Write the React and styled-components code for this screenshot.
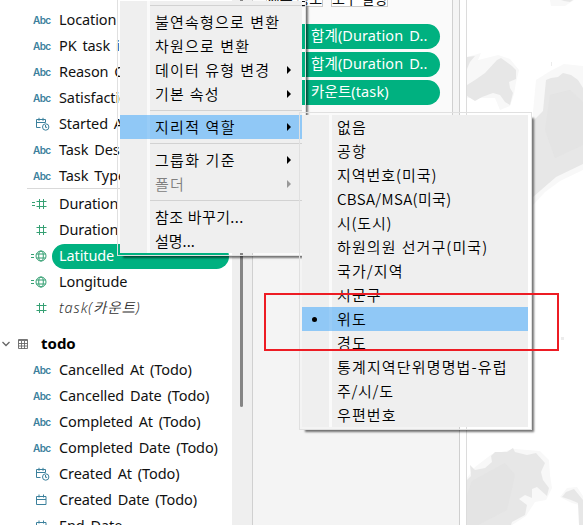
import React from "react";
import styled, { createGlobalStyle, css } from "styled-components";

const Global = createGlobalStyle`
  * { box-sizing: border-box; }
  body { margin: 0; overflow: hidden; background: #fff; }
`;

const Page = styled.div`
  position: relative;
  display: flex;
  width: 583px;
  height: 525px;
  overflow: hidden;
  background: #fff;
  color: #111;
  font: 15px/24px "Noto Sans", "Noto Sans CJK KR", sans-serif;
`;

const Sidebar = styled.aside`
  width: 232px;
  padding-top: 7px;
  background: #fff;
`;

const FieldRow = styled.div`
  display: grid;
  grid-template-columns: 52px 177px;
  height: 26px;
  align-items: center;
`;

const FieldIcon = styled.span`
  display: flex;
  justify-content: flex-end;
  padding-right: ${(p) => p.$inset}px;
  color: ${(p) => p.$color};
`;

const Abc = styled.span`
  width: 17px;
  font: 600 10px/12px Inter, sans-serif;
  letter-spacing: -0.6px;
`;

const FieldName = styled.span`
  height: 25px;
  padding-left: 7px;
  border-radius: 13px;
  line-height: 23px;
  white-space: nowrap;
  font-size: 14.5px;
  letter-spacing: -0.1px;
  word-spacing: 2.2px;
  ${(p) => p.$selected && css`background: #00b180; color: #fff;`}
  ${(p) => p.$italic && css`
    color: #333;
    font-style: italic;
    font-weight: 350;
    letter-spacing: 0.9px;
  `}
`;

const Divider = styled.div`
  height: 1px;
  margin: -1px 0 2px 27px;
  background: #d9d9d9;
`;

const TableHead = styled.div`
  display: grid;
  grid-template-columns: 16px 23px 1fr;
  align-items: center;
  height: 26px;
  margin-top: 10px;
  padding-left: 2px;
  color: #666;
`;

const TableName = styled.b`
  color: #000;
  font-size: 15px;
  line-height: 22px;
  height: 24px;
`;

const Gutter = styled.div`
  width: 21px;
  padding-left: 8px;
  background: #efefef;
  border-right: 1px solid #d0d0d0;
`;

const Thumb = styled.div`
  width: 3px;
  height: 407px;
  border-radius: 0 0 2px 2px;
  background: #858585;
`;

const Shelf = styled.section`
  width: 207px;
  background: #f4f4f4;
  border-right: 1px solid #cfcfcf;
`;

const MarksCard = styled.div`
  width: 200px;
  height: 260px;
  background: #fafafa;
  border-right: 1px solid #d0d0d0;
`;

const MarkButtons = styled.div`
  display: flex;
  gap: 8px;
  height: 24px;
  padding-left: 13px;
`;

const MarkButton = styled.div`
  display: flex;
  align-items: flex-end;
  justify-content: center;
  width: 57px;
  height: 7px;
  overflow: hidden;
  background: #fff;
  border: 1px solid #cacaca;
  border-top: 0;
  font-size: 14px;
  line-height: 20px;
  white-space: nowrap;
  span { margin-bottom: -3px; }
`;

const Pill = styled.div`
  width: 167px;
  height: 25px;
  margin: 0 0 3px 20px;
  padding-left: 38px;
  border-radius: 13px;
  background: #00b180;
  color: #fff;
  line-height: 22px;
  white-space: nowrap;
  font-size: 14.5px;
  letter-spacing: 0.1px;
  word-spacing: 2.2px;
`;

const Viz = styled.section`
  width: 123px;
  padding-left: 6px;
  background: #fff;
`;

const MapPane = styled.div`
  height: 525px;
  border-left: 1px solid #dcdcdc;
  svg { display: block; }
`;

const MenuPanel = styled.div`
  position: absolute;
  left: ${(p) => p.$x}px;
  top: ${(p) => p.$y}px;
  width: ${(p) => p.$w}px;
  padding: 2px 3px 2px 2px;
  border: 1px solid #e0e0e0;
  background: linear-gradient(90deg, #efefef 27px, #fafafa 27px 30px, #efefef 30px) content-box #fafafa;
  box-shadow: 4px 4px 2px -2px rgba(0, 0, 0, 0.55);
  ${(p) => p.$clipped && css`padding-top: 1px; border-top: 0;`}
`;

const MenuItem = styled.div`
  display: grid;
  grid-template-columns: 35px 1fr 15px;
  align-items: center;
  height: 24px;
  color: ${(p) => (p.$disabled ? "#808080" : "#000")};
  ${(p) => p.$active && css`background: linear-gradient(90deg, #90c8f6 27px, #98ccf7 27px 30px, #90c8f6 30px);`}
`;

const MenuText = styled.span`
  height: 24px;
  white-space: nowrap;
  font-family: "Noto Sans CJK KR", sans-serif;
  font-weight: 350;
  font-size: 15px;
  line-height: 24px;
  letter-spacing: ${(p) => p.$ls ?? 1.1}px;
  word-spacing: 0.6px;
`;

const Dot = styled.i`
  display: block;
  width: 5px;
  height: 5px;
  margin-left: 10px;
  border-radius: 50%;
  background: #000;
`;

const Arrow = styled.i`
  width: 4px;
  border: 4px solid transparent;
  border-left-color: ${(p) => (p.$disabled ? "#999" : "#000")};
  border-right: 0;
`;

const Separator = styled.div`
  height: 9px;
  padding: 4px 0 0 30px;
  &::before { content: ""; display: block; height: 1px; background: #d2d2d2; }
`;

const Highlight = styled.div`
  position: absolute;
  left: 264px;
  top: 293px;
  width: 295px;
  height: 58px;
  border: 2px solid #ed1c24;
`;

const BLUE = "#3b809c";
const GREEN = "#35a073";

const Calendar = ({ clock }) => (
  <svg width={clock ? 14 : 11} height="14" viewBox={clock ? "0 0 14 14" : "0 0 11 14"} fill="none" stroke="currentColor">
    {clock ? (
      <>
        <path d="M4.5 10.5h-4v-8h9v3M.5 5.5h9M3 .8v3M7 .8v3" />
        <circle cx="9.7" cy="10" r="3.2" />
        <path d="M9.5 8v2.3h1.6" />
      </>
    ) : (
      <path d="M.5 3.5h9.5v8H.5zM.5 6.5h9.5M3 1.5v3M7.5 1.5v3" />
    )}
  </svg>
);

const Hash = ({ calc }) => (
  <svg width="15" height="12" viewBox="0 0 15 12" fill="none" stroke="currentColor">
    {calc && <path d="M0 4.5h3M0 7.5h3" />}
    <path d="M7.5 1v10M11.5 1v10M4.5 3.5h10M4.5 8.5h10" />
  </svg>
);

const Globe = () => (
  <svg width="16" height="12" viewBox="0 0 16 12" fill="none" stroke="currentColor">
    <path d="M0 4.5h3M0 7.5h3" />
    <circle cx="10" cy="6" r="5" />
    <ellipse cx="10" cy="6" rx="2.3" ry="5" />
    <path d="M5.5 4h9M5.5 8h9" />
  </svg>
);

const Chevron = () => (
  <svg width="8" height="6" viewBox="0 0 8 6" fill="none" stroke="currentColor" strokeWidth="1.3">
    <path d="M.5 1L4 4.5 7.5 1" />
  </svg>
);

const TableIcon = () => (
  <svg width="10" height="10" viewBox="0 0 10 10" fill="none" stroke="currentColor" strokeWidth="0.9">
    <path d="M.5.5h9v9h-9zM.5 1.5h9M.5 4.5h9M.5 7h9M3.5 2v8M6.5 2v8" />
  </svg>
);

const icons = {
  abc: [<Abc>Abc</Abc>, BLUE, 2],
  datetime: [<Calendar clock />, BLUE, 2],
  date: [<Calendar />, BLUE, 5],
  calc: [<Hash calc />, GREEN, 5],
  hash: [<Hash />, GREEN, 5],
  globe: [<Globe />, GREEN, 5],
};

const Field = ({ icon, name, ...rest }) => {
  const [glyph, color, inset] = icons[icon];
  return (
    <FieldRow>
      <FieldIcon $color={color} $inset={inset}>{glyph}</FieldIcon>
      <FieldName {...rest}>{name}</FieldName>
    </FieldRow>
  );
};

const taskFields = [
  ["abc", "Location"], ["abc", "PK task id"], ["abc", "Reason Code"], ["abc", "Satisfaction"],
  ["datetime", "Started At"], ["abc", "Task Desc"], ["abc", "Task Type"],
];
const todoFields = [
  ["abc", "Cancelled At (Todo)"], ["abc", "Cancelled Date (Todo)"], ["abc", "Completed At (Todo)"],
  ["abc", "Completed Date (Todo)"], ["datetime", "Created At (Todo)"], ["date", "Created Date (Todo)"],
  ["date", "End Date"],
];
const fieldMenu = [
  null, { t: "불연속형으로 변환", ls: 1.2 }, { t: "차원으로 변환", ls: 1.2 }, { t: "데이터 유형 변경", sub: true, ls: 1.2 },
  { t: "기본 속성", sub: true }, null, { t: "지리적 역할", sub: true, active: true, ls: 1.3 }, null,
  { t: "그룹화 기준", sub: true, ls: 1.3 }, { t: "폴더", sub: true, disabled: true }, null,
  { t: "참조 바꾸기...", ls: 0.4 }, { t: "설명...", ls: 0 },
];
const roleMenu = [
  { t: "없음" }, { t: "공항" }, { t: "지역번호(미국)", ls: 0.95 }, { t: "CBSA/MSA(미국)", ls: 0.35 },
  { t: "시(도시)", ls: 0.8 }, { t: "하원의원 선거구(미국)" }, { t: "국가/지역" }, { t: "시군구" },
  { t: "위도", active: true, checked: true }, { t: "경도" }, { t: "통계지역단위명명법-유럽", ls: 1.15 },
  { t: "주/시/도", ls: 0.7 }, { t: "우편번호" },
];

const Menu = ({ items, ...rest }) => (
  <MenuPanel {...rest}>
    {items.map((m, k) => m ? (
      <MenuItem key={k} $active={m.active} $disabled={m.disabled}>
        <span>{m.checked && <Dot />}</span>
        <MenuText $ls={m.ls}>{m.t}</MenuText>
        {m.sub && <Arrow $disabled={m.disabled} />}
      </MenuItem>
    ) : <Separator key={k} />)}
  </MenuPanel>
);

const MapDrawing = () => (
  <svg width="116" height="525" viewBox="467 0 116 525">
    <g fill="#f8f8f8">
      <path d="M467 57L481 53 478 60 498 55 510 59 519 70 516 82 514 94 510 106 500 110 495 98 467 98z" />
      <path d="M550 0H574L565 6H551zM536 80L552 70 564 64 583 66V170L560 181 545 192 533 205V112z" />
      <path d="M467 478L475 467 492 454 515 449 540 451 549 460 550 475 552 488 546 500 535 502 526 516 512 525H467zM560 497L567 488 577 487 583 496V506L572 503z" />
    </g>
    <g fill="#e7e7e7">
      <path d="M467 85L475 80 485 73 497 60 501 58 512 66 516 70V79L509 82 510 88 513 93 510 105 505 102 500 95 493 93 482 97 475 101 467 96z" />
      <path d="M467 57L475 56 470 62 467 69zM561 0H573L570 2 564 1z" />
      <path d="M546 80L551 78 558 77 563 73 571 75 578 80 583 88V164L556 177 541 190 533 197V121L543 111z" />
      <path d="M467 480L471 476 470 465 475 470 485 468 492 462 491 456 495 452 507 452 513 448 515 452 527 455 536 453 545 463 541 472 543 480 549 488 547 496 537 487 532 489V498L525 495 519 499 527 505 525 515 512 522 511 525H467zM562 497L566 492 574 489 583 500V525H579L578 503 571 500z" />
    </g>
    <path d="M472 481L505 463 515 475 507 510 478 525H467V495zM550 95L570 90 583 102V145L555 158 545 130z" fill="#e2e2e2" opacity=".5" />
    <path d="M551 62h1v4h-1zM561 337h3v3h-3z" fill="#ececec" />
  </svg>
);

export default function App() {
  return (
    <Page>
      <Global />
      <Sidebar>
        {taskFields.map(([i, n]) => <Field key={n} icon={i} name={n} />)}
        <Divider />
        <Field icon="calc" name="Duration Day" />
        <Field icon="hash" name="Duration" />
        <Field icon="globe" name="Latitude" $selected />
        <Field icon="globe" name="Longitude" />
        <Field icon="hash" name="task(카운트)" $italic />
        <TableHead>
          <Chevron />
          <TableIcon />
          <TableName>todo</TableName>
        </TableHead>
        {todoFields.map(([i, n]) => <Field key={n} icon={i} name={n} />)}
      </Sidebar>
      <Gutter><Thumb /></Gutter>
      <Shelf>
        <MarksCard>
          <MarkButtons>
            <MarkButton><span>세부 정보</span></MarkButton>
            <MarkButton><span>도구 설명</span></MarkButton>
          </MarkButtons>
          <Pill>합계(Duration D..</Pill>
          <Pill>합계(Duration D..</Pill>
          <Pill>카운트(task)</Pill>
        </MarksCard>
      </Shelf>
      <Viz><MapPane><MapDrawing /></MapPane></Viz>
      <Menu items={fieldMenu} $x={117} $y={0} $w={189} $clipped />
      <Menu items={roleMenu} $x={299} $y={112} $w={233} />
      <Highlight />
    </Page>
  );
}
